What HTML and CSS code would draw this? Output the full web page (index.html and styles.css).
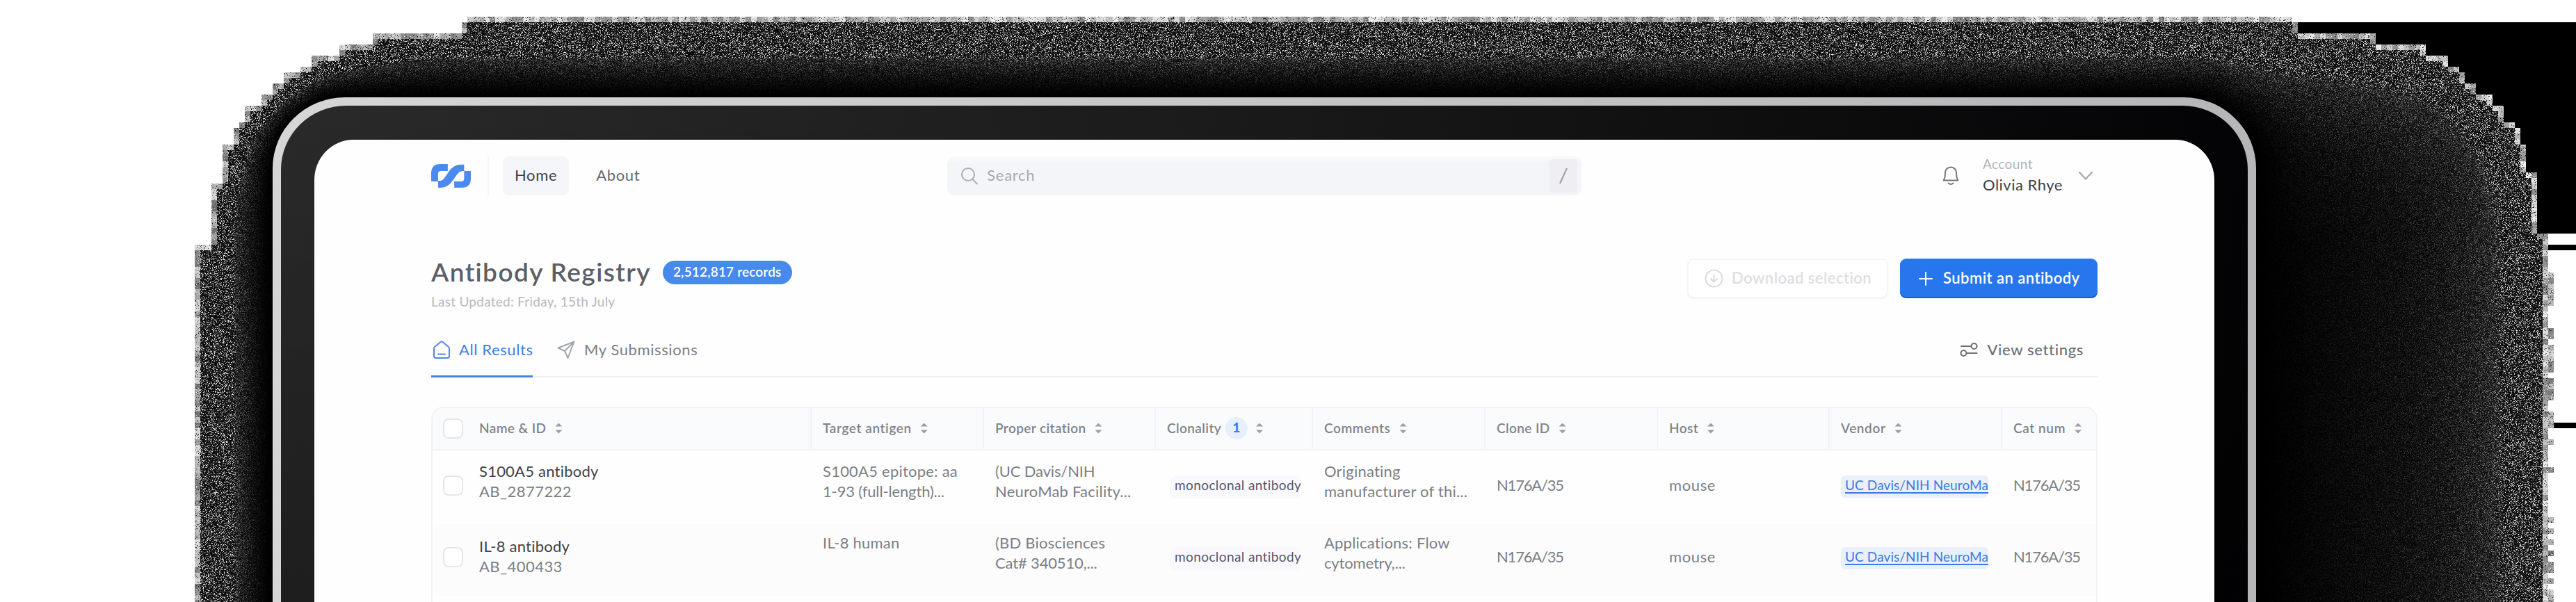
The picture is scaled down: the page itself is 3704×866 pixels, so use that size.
FILE: index.html
```html
<!DOCTYPE html>
<html lang="en">
<head>
<meta charset="utf-8">
<title>Antibody Registry</title>
<link rel="stylesheet" href="styles.css">
</head>
<body>
<canvas id="shadow" class="shadow" width="3704" height="866"></canvas>
<div class="device"><div class="bezel"><main class="screen">
  <header class="nav">
    <svg class="logo" viewBox="30 60 172 102" preserveAspectRatio="none" fill="#4b8bf0"><path d="M30 135V100Q30 60 70 60H102V90H72Q60 90 60 102V135Z"/><path d="M60 162V132H66Q78 132 86 122L110 88Q130 62 158 62H173V90H166Q152 92 144 103L120 136Q100 162 72 162Z"/><path d="M173 90H202V122Q202 162 162 162H130V135H160Q173 135 173 122Z"/></svg>
    <span class="divider"></span>
    <a class="link active">Home</a><a class="link">About</a>
    <div class="search">
      <svg width="26" height="26" viewBox="0 0 26 26" fill="none" stroke="#aaadb3" stroke-width="2" stroke-linecap="round"><circle cx="11" cy="11" r="9"/><path d="M17.5 18L24 24.5"/></svg>
      <span class="placeholder">Search</span>
      <span class="key"><svg width="14" height="24" viewBox="0 0 14 24" stroke="#9b9ea6" stroke-width="2"><path d="M12 1L2 23"/></svg></span>
    </div>
    <svg class="bell" width="24" height="28" viewBox="0 0 24 28" fill="none" stroke="#73777f" stroke-width="2" stroke-linejoin="round" stroke-linecap="round"><path d="M1.5 20.5C4 17 4 14 4 9.500C4 5 7.500 1.500 12 1.500S20 5 20 9.500C20 14 20 17 22.500 20.500Z"/><path d="M8.500 24.500Q12 27.500 15.500 24.500"/></svg>
    <div class="account"><span class="small">Account</span><span class="user">Olivia Rhye</span></div>
    <svg class="chev" width="20" height="12" viewBox="0 0 20 12" fill="none" stroke="#9fa3a9" stroke-width="2" stroke-linecap="round"><path d="M1 1L10 10.500L19 1"/></svg>
  </header>

  <section class="head">
    <div>
      <div class="titlerow"><h1>Antibody Registry</h1><span class="records">2,512,817 records</span></div>
      <p class="updated">Last Updated: Friday, 15th July</p>
    </div>
    <div class="actions">
      <button class="btn ghost"><svg width="27" height="27" viewBox="0 0 27 27" fill="none" stroke="#d9dce0" stroke-width="2" stroke-linecap="round" stroke-linejoin="round"><circle cx="13.500" cy="13.500" r="12"/><path d="M13.500 8V18M9 14L13.500 18.500L18 14"/></svg><span>Download selection</span></button>
      <button class="btn primary"><svg width="20" height="20" viewBox="0 0 20 20" stroke="#fff" stroke-width="2" stroke-linecap="round"><path d="M10 1V19M1 10H19"/></svg><span>Submit an antibody</span></button>
    </div>
  </section>

  <nav class="tabs">
    <a class="tab on"><svg width="26" height="26" viewBox="0 0 26 26" fill="none" stroke="#4f86e8" stroke-width="2" stroke-linejoin="round" stroke-linecap="round"><path d="M2 11.500Q2 9.500 3.500 8.500L11.500 2Q13 1 14.500 2L22.500 8.500Q24 9.500 24 11.500V22Q24 25 21 25H5Q2 25 2 22Z"/><path d="M8 19.500H18"/></svg><span>All Results</span></a>
    <a class="tab subs"><svg width="26" height="26" viewBox="0 0 26 26" fill="none" stroke="#a2a5aa" stroke-width="2" stroke-linejoin="round"><path d="M24.500 1.500L1.500 10.500L11 15L15.500 25ZM24.500 1.500L11 15"/></svg><span>My Submissions</span></a>
    <a class="tab settings"><svg width="26" height="22" viewBox="0 0 26 22" fill="none" stroke="#6f737c" stroke-width="2.200" stroke-linecap="round"><circle cx="20.500" cy="6" r="4"/><path d="M2 6H16"/><circle cx="5.500" cy="16" r="4"/><path d="M10 16H24.500"/></svg><span>View settings</span></a>
  </nav>

  <section class="table">
    <div class="row th">
      <div class="c first"><i class="box"></i><span>Name &amp; ID</span><i class="sort"></i></div>
      <div class="c w">Target antigen<i class="sort"></i></div>
      <div class="c">Proper citation<i class="sort"></i></div>
      <div class="c">Clonality<b class="count">1</b><i class="sort near"></i></div>
      <div class="c w">Comments<i class="sort"></i></div>
      <div class="c">Clone ID<i class="sort"></i></div>
      <div class="c">Host<i class="sort"></i></div>
      <div class="c w">Vendor<i class="sort"></i></div>
      <div class="c w">Cat num<i class="sort"></i></div>
    </div>
    <div class="row r1">
      <div class="c first"><i class="box"></i><div><div class="name">S100A5 antibody</div><div class="code">AB_2877222</div></div></div>
      <div class="c">S100A5 epitope: aa<br><span class="tight">1-93 (full-length)...</span></div>
      <div class="c"><span class="tight">(UC Davis/NIH</span><br>NeuroMab Facility...</div>
      <div class="c mid"><span class="chip">monoclonal antibody</span></div>
      <div class="c">Originating<br>manufacturer of thi...</div>
      <div class="c mid cat">N176A/35</div>
      <div class="c mid host">mouse</div>
      <div class="c mid"><a class="vendor">UC Davis/NIH NeuroMa</a></div>
      <div class="c mid cat">N176A/35</div>
    </div>
    <div class="row r2">
      <div class="c first"><i class="box"></i><div class="low"><div class="name">IL-8 antibody</div><div class="code">AB_400433</div></div></div>
      <div class="c">IL-8 human</div>
      <div class="c">(BD Biosciences<br><span class="tight">Cat# 340510,...</span></div>
      <div class="c mid"><span class="chip">monoclonal antibody</span></div>
      <div class="c">Applications: Flow<br><span class="tight">cytometry,...</span></div>
      <div class="c mid cat">N176A/35</div>
      <div class="c mid host">mouse</div>
      <div class="c mid"><a class="vendor">UC Davis/NIH NeuroMa</a></div>
      <div class="c mid cat">N176A/35</div>
    </div>
  </section>
</main></div></div>
<script src="shadow.js"></script>
</body>
</html>
```
FILE: styles.css
```css
* { box-sizing: border-box; }
body { display: flow-root; margin: 0; height: 866px; overflow: hidden; position: relative; background: #fff; font-family: Lato, "Open Sans", sans-serif; font-size: 22px; color: #7b7e84; }
svg { display: block; flex: none; }
.shadow { position: absolute; left: 0; top: 0; }
.device { position: relative; width: 2852px; height: 726px; margin: 140px 0 0 392px; padding: 12px 12px 0; border-radius: 104px 104px 0 0 / 102px 102px 0 0; background: linear-gradient(90deg, #d6d6d6, #b6b6b8); }
.bezel { height: 714px; padding: 49px 48px 0; border-radius: 94px 94px 0 0 / 92px 92px 0 0; background: linear-gradient(rgba(0,0,0,0), rgba(0,0,0,.28)), linear-gradient(96deg, #2a2a2a, #1b1b1b 45%, #020204 100%); }
.screen { height: 665px; padding: 24px 168px 0; border-radius: 56px 56px 0 0 / 58px 58px 0 0; background: #fefefe; }

.nav { display: flex; align-items: center; height: 56px; }
.logo { width: 57px; height: 34px; margin-top: -1px; }
.divider { width: 2px; height: 56px; margin: 0 20px 0 24px; background: #f5f6f8; }
.link { height: 56px; line-height: 53px; padding: 0 17px; letter-spacing: .65px; color: #66696f; }
.link.active { background: #f5f6fa; border-radius: 9px; color: #3d4046; margin-right: 22px; }
.search { display: flex; align-items: center; width: 912px; height: 56px; margin-left: 425px; padding: 0 6px 0 19px; border-radius: 10px; background: linear-gradient(#f9fafb, #f4f5f8 20%); }
.placeholder { margin: 0 auto 3px 12px; color: #a6aab0; letter-spacing: .7px; }
.key { display: flex; align-items: center; justify-content: center; width: 40px; height: 48px; border-radius: 5px; background: #eeeef3; }
.bell { margin: 0 0 0 auto; }
.account { display: flex; flex-direction: column; width: 138px; margin-left: 34px; }
.small { font-size: 19px; line-height: 26px; letter-spacing: .4px; color: #b0b4b9; margin-bottom: 3px; margin-top: -3px; }
.user { line-height: 28px; letter-spacing: .5px; color: #3e4046; white-space: nowrap; }
.chev { margin-right: 7px; }

.head { display: flex; justify-content: space-between; margin-top: 87px; }
.titlerow { display: flex; height: 44px; }
h1 { margin: 1px 0 0; font-size: 37px; line-height: 44px; font-weight: 600; letter-spacing: 1.4px; color: #5d5f68; }
.records { height: 34px; margin: 7px 0 0 17px; padding: 0 15px; border-radius: 17px; background: #4889ed; color: #fff; font-size: 19px; line-height: 31px; font-weight: 600; letter-spacing: .16px; }
.updated { margin: 10px 0 0; font-size: 19px; line-height: 24px; letter-spacing: .26px; color: #b6b9bd; }
.actions { display: flex; gap: 17px; margin-top: 4px; height: 57px; }
.btn { display: flex; align-items: center; height: 57px; padding: 0; border: 0; border-radius: 9px; font: 600 22px Lato, sans-serif; letter-spacing: .46px; white-space: nowrap; }
.btn span { padding-bottom: 2px; }
.ghost { width: 289px; padding-left: 23px; gap: 12px; border: 2px solid #f4f5f7; background: #fff; color: #dcdee2; box-shadow: 0 1px 2px #f2f3f5; }
.primary { width: 284px; padding-left: 27px; gap: 15px; background: #2776ee; color: #fff; box-shadow: inset 0 -2px #1a5fcb; }

.tabs { display: flex; height: 81px; margin-top: 16px; box-shadow: inset 0 -2px #f0f1f3; }
.tab { display: flex; align-items: center; gap: 13px; letter-spacing: .6px; color: #7c7f85; }
.on { width: 146px; gap: 12px; padding-left: 2px; white-space: nowrap; color: #3f7fe6; box-shadow: inset 0 -3px #4a83e1; }
.subs { margin-left: 35px; }
.settings { margin: 0 20px 0 auto; font-weight: 500; letter-spacing: .65px; color: #6b6e76; }

.table { height: 281px; margin-top: 42px; border: 2px solid #f2f3f6; border-bottom: 0; border-radius: 18px 18px 0 0; overflow: hidden; line-height: 28.500px; }
.row { display: grid; grid-template-columns: 543px 248px 247px 226px 248px 248px 247px 248px 137px; }
.c { padding-left: 18px; letter-spacing: .22px; white-space: nowrap; overflow: hidden; }
.th { height: 61px; background: #fafbfd; border-bottom: 2px solid #f1f2f5; font-size: 19px; font-weight: 600; color: #808389; }
.th .c { display: flex; align-items: center; padding-bottom: 1px; letter-spacing: .4px; border-left: 2px solid #f2f3f6; padding-left: 16px; }
.th .w { letter-spacing: .6px; }
.th .first { border-left: 0; padding-left: 15px; }
.first { display: flex; padding-left: 15px; }
.box { flex: none; width: 29px; height: 29px; margin-right: 23px; border: 2px solid #e4e6ea; border-radius: 8px; background: #fff; }
.sort { width: 10px; height: 15px; margin-left: 13px; background: linear-gradient(#9b9ea3, #9b9ea3); clip-path: polygon(50% 0, 100% 33%, 0 33%, 0 67%, 100% 67%, 50% 100%, 0 67%, 0 33%); }
.near { margin-left: 12px; }
.count { width: 32px; height: 32px; margin-left: 6px; border-radius: 50%; background: #e6effb; color: #3b7af0; line-height: 30px; text-align: center; }
.r1 { height: 106px; padding-top: 16px; }
.r2 { height: 103px; padding-top: 13px; background: #fcfcfd; }
.r1 .box, .r2 .box { margin-top: 20px; }
.low { padding-top: 5px; }
.name { color: #3f4146; }
.code { letter-spacing: .45px; }
.tight { letter-spacing: -.15px; }
.mid { padding-top: 20px; }
.cat { letter-spacing: -1.200px; }
.host { letter-spacing: .6px; }
.chip { display: block; width: 187px; height: 34px; margin-left: 5px; padding-left: 6px; border-radius: 8px; background: #f9f9fd; font-size: 19px; line-height: 28px; letter-spacing: .4px; color: #55566e; overflow: hidden; }
.vendor { display: block; width: 212px; height: 32px; padding-left: 6px; border-radius: 6px; background: #e9f0fc; font-size: 19px; line-height: 28px; letter-spacing: .1px; color: #3b7be2; text-decoration: underline; text-decoration-thickness: 1.500px; text-underline-offset: 3px; overflow: hidden; }
```
FILE: shadow.js
```js
// Grainy drop shadow behind the device, with a stepped 8px silhouette.
const canvas = document.getElementById('shadow');
const ctx = canvas.getContext('2d');
const W = 3704, H = 866;

// [first y, left x, right x] for each step of the silhouette
const steps = [
  [24, 672, 3296], [32, 664, 3304], [48, 536, 3416], [64, 488, 3488],
  [80, 448, 3520], [96, 432, 3536], [104, 408, 3544], [120, 392, 3560],
  [136, 376, 3584], [152, 352, 3600], [176, 344, 3616], [184, 336, 3624],
  [208, 320, 3632], [248, 320, 3648], [264, 304, 3648], [336, 304, 3664],
  [352, 280, 3664]
];
const edge = y => {
  let s = null;
  for (const e of steps) if (y >= e[0]) s = e;
  return s;
};

let seed = 12345;
const rnd = () => {
  seed ^= seed << 13; seed ^= seed >>> 17; seed ^= seed << 5;
  return (seed >>> 0) / 4294967296;
};
const clamp = v => Math.max(0, Math.min(1, v));
const smooth = (a, b, v) => { const t = clamp((v - a) / (b - a)); return t * t * (3 - 2 * t); };

// distance from the outer shadow edge, positive inside
function inner(x, y) {
  const left = x < 672, right = x > 3304;
  if (y > 352) return Math.min(x - 280, 3664 - x, left || right ? 9999 : y - 24);
  if (!left && !right) return y - 24;
  const rx = left ? 392 : 360, ry = 328;
  const dx = left ? 672 - x : x - 3304, dy = 352 - y;
  const h = Math.hypot(dx, dy) || 1, r = Math.hypot(dx / rx, dy / ry);
  return r ? h / r - h : 300;
}
// distance outside the device frame
function outer(x, y) {
  const dx = Math.max(496 - x, x - 3140, 0), dy = Math.max(244 - y, 0);
  return Math.max(0, Math.hypot(dx, dy) - 104);
}

const img = ctx.createImageData(W, H);
const put = (x, y, v) => {
  const i = (y * W + x) * 4;
  img.data[i] = img.data[i + 1] = img.data[i + 2] = v;
  img.data[i + 3] = 255;
};
for (let y = 0; y < H; y++) {
  const e = edge(y);
  for (let x = 0; x < W; x++) {
    const bar = x >= 3304 && ((y >= 32 && y < 336) || (y >= 352 && y < 360) || (y >= 608 && y < 616));
    put(x, y, bar ? 0 : 255);
    if (!e || x < e[1] || x >= e[2]) continue;
    if (y > 250 && x > 400 && x < 3236) continue;
    const d = Math.max(0, inner(x, y)), o = outer(x, y), t = d / (d + o + .01);
    const side = smooth(3200, 3560, x);
    const cut = .53 - .34 * side;
    const bright = 1 - smooth(cut - .05, cut + .02, t);
    const fade = clamp((1 - t) / (1 - cut));
    const a = rnd(), b = rnd();
    const strong = a < .25 ? 110 + 145 * b : 36 * b;
    const soft = Math.pow(fade, 1.5 + 1.2 * side) * (a < .35 ? 140 : 60) * b;
    put(x, y, strong * bright + soft * (1 - bright));
  }
}
// pale blocks along the rim
for (let y = 24; y < H; y += 8) {
  const e = edge(y), p = edge(y - 8) || [0, W, 0];
  const block = (x, base) => {
    const g = base + rnd() * 110;
    for (let j = 0; j < 8 && y + j < H; j++)
      for (let i = 0; i < 8; i++) put(x + i, y + j, rnd() < .8 ? g : 255 * rnd());
  };
  block(e[1], 110);
  block(e[2] - 8, 130);
  for (let x = e[1]; x < Math.min(p[1], 3296); x += 8) block(x, 120);
  for (let x = Math.max(p[2], 680); x < e[2]; x += 8) block(x, 130);
  if (y >= 352 && rnd() < .5) block(3664, 110);
}
ctx.putImageData(img, 0, 0);
```
